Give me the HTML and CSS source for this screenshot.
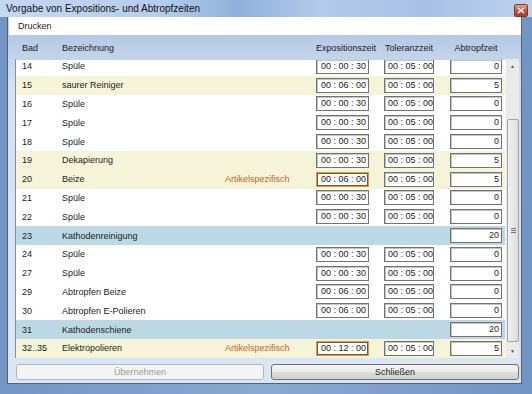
FILE: index.html
```html
<!DOCTYPE html>
<html lang="de">
<head>
    <meta charset="utf-8" />
    <title>Vorgabe von Expositions- und Abtropfzeiten</title>
    <link rel="stylesheet" href="styles.css">
</head>
<body>
    <div class="window">
        <div class="titlebar">
            <span class="title">Vorgabe von Expositions- und Abtropfzeiten</span>
            <span class="close">
                <svg width="8" height="7" viewBox="0 0 8 7"><path d="M1 1 L7 6 M7 1 L1 6" stroke="#fff" stroke-width="1.6"/></svg>
            </span>
        </div>
        <div class="frame">
            <div class="menu"><span>Drucken</span></div>
            <div class="content">
                <div class="heads">
                    <span>Bad</span>
                    <span>Bezeichnung</span>
                    <span></span>
                    <span>Expositionszeit</span>
                    <span class="center">Toleranzzeit</span>
                    <span class="center">Abtropfzeit</span>
                </div>
                <div class="listwrap">
                    <div class="list">
                        <div class="rows">
                            <div class="row"><span>14</span><span>Spüle</span><span></span><span class="box">00 : 00 : 30</span><span class="box">00 : 05 : 00</span><span class="box num">0</span></div>
                            <div class="row yellow"><span>15</span><span>saurer Reiniger</span><span></span><span class="box">00 : 06 : 00</span><span class="box">00 : 05 : 00</span><span class="box num">5</span></div>
                            <div class="row"><span>16</span><span>Spüle</span><span></span><span class="box">00 : 00 : 30</span><span class="box">00 : 05 : 00</span><span class="box num">0</span></div>
                            <div class="row"><span>17</span><span>Spüle</span><span></span><span class="box">00 : 00 : 30</span><span class="box">00 : 05 : 00</span><span class="box num">0</span></div>
                            <div class="row"><span>18</span><span>Spüle</span><span></span><span class="box">00 : 00 : 30</span><span class="box">00 : 05 : 00</span><span class="box num">0</span></div>
                            <div class="row yellow"><span>19</span><span>Dekapierung</span><span></span><span class="box">00 : 00 : 30</span><span class="box">00 : 05 : 00</span><span class="box num">5</span></div>
                            <div class="row yellow"><span>20</span><span>Beize</span><span class="spec">Artikelspezifisch</span><span class="box focus">00 : 06 : 00</span><span class="box">00 : 05 : 00</span><span class="box num">5</span></div>
                            <div class="row"><span>21</span><span>Spüle</span><span></span><span class="box">00 : 00 : 30</span><span class="box">00 : 05 : 00</span><span class="box num">0</span></div>
                            <div class="row"><span>22</span><span>Spüle</span><span></span><span class="box">00 : 00 : 30</span><span class="box">00 : 05 : 00</span><span class="box num">0</span></div>
                            <div class="row blue"><span>23</span><span>Kathodenreinigung</span><span></span><span></span><span></span><span class="box num">20</span></div>
                            <div class="row"><span>24</span><span>Spüle</span><span></span><span class="box">00 : 00 : 30</span><span class="box">00 : 05 : 00</span><span class="box num">0</span></div>
                            <div class="row"><span>27</span><span>Spüle</span><span></span><span class="box">00 : 00 : 30</span><span class="box">00 : 05 : 00</span><span class="box num">0</span></div>
                            <div class="row"><span>29</span><span>Abtropfen Beize</span><span></span><span class="box">00 : 06 : 00</span><span class="box">00 : 05 : 00</span><span class="box num">0</span></div>
                            <div class="row"><span>30</span><span>Abtropfen E-Polieren</span><span></span><span class="box">00 : 06 : 00</span><span class="box">00 : 05 : 00</span><span class="box num">0</span></div>
                            <div class="row blue"><span>31</span><span>Kathodenschiene</span><span></span><span></span><span></span><span class="box num">20</span></div>
                            <div class="row yellow"><span>32..35</span><span>Elektropolieren</span><span class="spec">Artikelspezifisch</span><span class="box focus">00 : 12 : 00</span><span class="box">00 : 05 : 00</span><span class="box num">5</span></div>
                        </div>
                    </div>
                    <div class="scrollbar">
                        <span class="arrow">&#9650;</span>
                        <div class="track">
                            <div class="thumb"><span class="grip"></span></div>
                        </div>
                        <span class="arrow">&#9660;</span>
                    </div>
                </div>
                <div class="buttons">
                    <button disabled>Übernehmen</button>
                    <button>Schließen</button>
                </div>
            </div>
        </div>
    </div>
</body>
</html>
```

FILE: styles.css
```css
body {
    margin: 0;
    font-family: "Liberation Sans", Arial, sans-serif;
    font-size: 9px;
    color: #1c1c1c;
}
.window {
    width: 532px;
    height: 394px;
    box-sizing: border-box;
    background: linear-gradient(to right, #7396c6, #8aa9d4 50%, #7095c5);
    padding: 0 10px 10px 7px;
    display: flex;
    flex-direction: column;
}
.titlebar {
    height: 18px;
    margin: 0 -10px 0 -7px;
    padding: 0 4px 0 6px;
    display: flex;
    align-items: center;
    justify-content: space-between;
    background: linear-gradient(to right, #c4d8f0, #b5cdec 30%, #8fb0dc 45%, #b3cbea 60%, #a7c2e6 80%, #bcd2ee);
}
.title {
    font-size: 10px;
    color: #111;
}
.close {
    width: 12px;
    height: 11px;
    border: 1px solid #7a3a2c;
    border-radius: 2px;
    background: linear-gradient(#e9a48f, #c8553a 50%, #b43a22);
    display: flex;
    align-items: center;
    justify-content: center;
    margin-top: 3px;
}
.frame {
    flex: 1;
    display: flex;
    flex-direction: column;
    border: 1px solid #52637a;
    border-top: none;
}
.menu {
    height: 18px;
    background: #fff;
    display: flex;
    align-items: center;
    padding-left: 9px;
    border-left: 1px solid #c8d2de;
}
.content {
    flex: 1;
    display: flex;
    flex-direction: column;
    background: linear-gradient(#b4c9e5 0, #d5e1f0 50px, #dbe6f3 100%);
    padding: 0 2px 3px 7px;
}
.heads, .row {
    display: grid;
    grid-template-columns: 40px 163px 91px 68px 66px 52px;
    align-items: center;
}
.heads {
    height: 24px;
    padding: 2px 0 0 7px;
    box-sizing: border-box;
}
.heads .center {
    text-align: center;
    width: 52px;
}
.heads span:nth-child(5) {
    width: 50px;
}
.listwrap {
    height: 299px;
    display: flex;
}
.list {
    flex: 1;
    background: #fff;
    border-left: 1px solid #8a9099;
    border-top: 1px solid #c9d3df;
    overflow: hidden;
}
.rows {
    margin-top: -3px;
}
.row {
    height: 18.8px;
    padding-left: 6px;
}
.row.yellow {
    background: #f6f4d8;
}
.row.blue {
    background: #bcd8e4;
}
.spec {
    color: #c0642c;
}
.box {
    height: 15px;
    box-sizing: border-box;
    width: 53px;
    background: #fff;
    border: 1px solid #737373;
    box-shadow: inset 1px 1px 0 #c4c4c4;
    padding: 0 0 0 4px;
    line-height: 13px;
    white-space: nowrap;
}
.row .box:nth-child(5) {
    width: 50px;
    padding-left: 3px;
}
.box.num {
    width: 52px;
    text-align: right;
    padding: 0 2px 0 0;
}
.box.focus {
    border: 1px solid #e39a32;
    box-shadow: inset 0 0 0 1px #6b5a3e;
}
.scrollbar {
    width: 13px;
    background: #eaeaea;
    border-left: 1px solid #f4f4f4;
    display: flex;
    flex-direction: column;
}
.arrow {
    height: 14px;
    font-size: 5px;
    color: #5a5a5a;
    display: flex;
    align-items: center;
    justify-content: center;
}
.track {
    flex: 1;
    display: flex;
    flex-direction: column;
    padding-top: 46px;
}
.thumb {
    flex: 1;
    margin: 0 0 2px 1px;
    border: 1px solid #a3a3a3;
    border-radius: 2px;
    background: linear-gradient(to right, #f1f1f1, #dcdcdc);
    display: flex;
    align-items: center;
    justify-content: center;
}
.grip {
    width: 5px;
    height: 5px;
    border-top: 1px solid #777;
    border-bottom: 1px solid #777;
    box-sizing: border-box;
    background: linear-gradient(transparent 1px, #777 1px, #777 2px, transparent 2px);
}
.buttons {
    display: grid;
    grid-template-columns: 1fr 1fr;
    gap: 7px;
    margin-top: 6px;
    padding-left: 1px;
}
button {
    height: 16px;
    font-family: "Liberation Sans", Arial, sans-serif;
    font-size: 9px;
    padding: 0;
    border: 1px solid #707070;
    border-radius: 3px;
    color: #1c1c1c;
    background: linear-gradient(#f3f3f3, #ececec 50%, #dedede 50%, #d0d0d0);
}
button:disabled {
    border-color: #b2b6b9;
    color: #9a9a9a;
    background: #f4f4f4;
}
```
